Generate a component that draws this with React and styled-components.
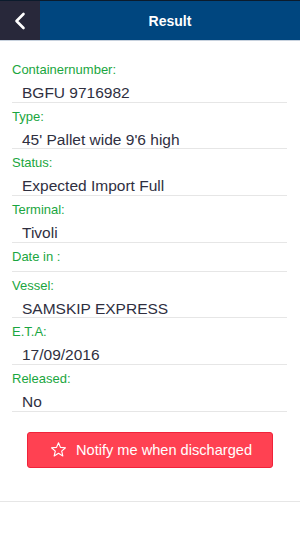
import styled, { createGlobalStyle } from 'styled-components'

const GlobalStyle = createGlobalStyle`
  html, body {
    margin: 0;
    padding: 0;
    background: #fff;
  }
  body {
    font-family: 'Liberation Sans', Arial, sans-serif;
  }
`

const rows = [
  { label: 'Containernumber:', value: 'BGFU 9716982' },
  { label: 'Type:', value: "45' Pallet wide 9'6 high" },
  { label: 'Status:', value: 'Expected Import Full' },
  { label: 'Terminal:', value: 'Tivoli' },
  { label: 'Date in :', value: '' },
  { label: 'Vessel:', value: 'SAMSKIP EXPRESS' },
  { label: 'E.T.A:', value: '17/09/2016' },
  { label: 'Released:', value: 'No' },
]

export default function App() {
  return (
    <Page>
      <GlobalStyle />
      <Header>
        <BackButton aria-label="Back">
          <svg width="14" height="18" viewBox="0 0 14 18">
            <path d="M10.5 2 L3.5 9 L10.5 16" fill="none" stroke="#fff" strokeWidth="2.6" strokeLinecap="round" strokeLinejoin="round" />
          </svg>
        </BackButton>
        <Title>Result</Title>
      </Header>

      <List>
        {rows.map((row) => (
          <Row key={row.label}>
            <Label>{row.label}</Label>
            {row.value && <Value>{row.value}</Value>}
          </Row>
        ))}
      </List>

      <ButtonWrap>
        <NotifyButton>
          <svg width="17" height="17" viewBox="0 0 24 24">
            <path
              d="M12 2.5 L14.8 9 L21.8 9.6 L16.5 14.2 L18.1 21.1 L12 17.4 L5.9 21.1 L7.5 14.2 L2.2 9.6 L9.2 9 Z"
              fill="none"
              stroke="#fff"
              strokeWidth="1.6"
              strokeLinejoin="round"
            />
          </svg>
          Notify me when discharged
        </NotifyButton>
      </ButtonWrap>

      <Footer />
    </Page>
  )
}

const Page = styled.div`
  width: 300px;
  min-height: 534px;
  background: #fff;
`

const Header = styled.div`
  display: flex;
  height: 41px;
  background: #00467f;
  border-top: 1px solid #0b1b2c;
  box-sizing: border-box;
  border-bottom: 1px solid #c8d2de;
`

const BackButton = styled.div`
  width: 40px;
  background: #28283a;
  display: flex;
  align-items: center;
  justify-content: center;
`

const Title = styled.div`
  flex: 1;
  display: flex;
  align-items: center;
  justify-content: center;
  color: #fff;
  font-size: 14px;
  font-weight: 700;
`

const List = styled.div`
  padding: 15px 13px 0 12px;
`

const Row = styled.div`
  border-bottom: 1px solid #e6e6e6;
`

const Label = styled.div`
  height: 28px;
  line-height: 28px;
  color: #1aa640;
  font-size: 13px;
`

const Value = styled.div`
  height: 17.7px;
  line-height: 18px;
  padding-left: 10px;
  color: #2f2f3f;
  font-size: 15.5px;
`

const ButtonWrap = styled.div`
  display: flex;
  justify-content: center;
  padding: 20px 0 33px;
`

const NotifyButton = styled.button`
  width: 246px;
  height: 36px;
  display: flex;
  align-items: center;
  justify-content: center;
  gap: 9px;
  background: #ff4152;
  border: 1px solid #f0233a;
  border-radius: 3px;
  color: #fff;
  font-family: 'Liberation Sans', Arial, sans-serif;
  font-size: 14.6px;
  padding: 0 0 0 2px;
`

const Footer = styled.div`
  border-top: 1px solid #e6e6e6;
`
